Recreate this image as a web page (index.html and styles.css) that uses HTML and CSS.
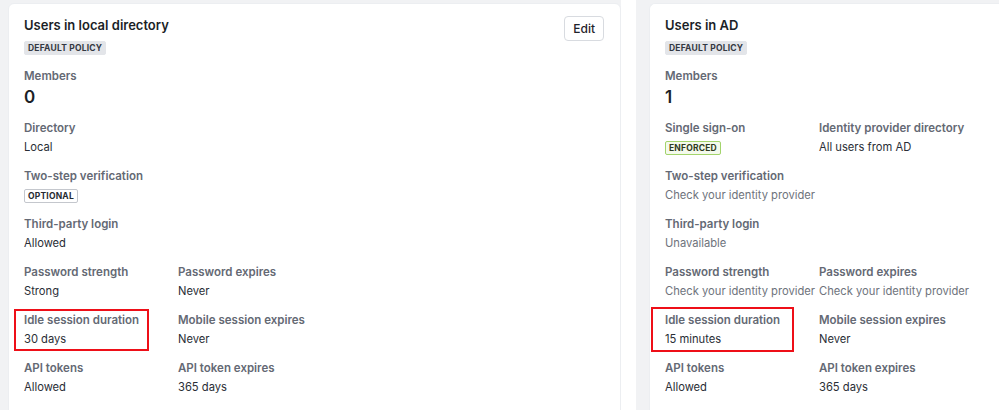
FILE: index.html
```html
<!DOCTYPE html>
<html lang="en">
<head>
<meta charset="utf-8">
<title>Policies</title>
<link rel="stylesheet" href="styles.css">
</head>
<body>
<div class="page">
  <div class="col col-a">
    <section class="card">
      <header class="card-head">
        <div class="head-main">
          <h2 class="title">Users in local directory</h2>
          <span class="badge badge-default">DEFAULT POLICY</span>
        </div>
        <button class="btn">Edit</button>
      </header>
      <div class="fields">
        <div class="field full">
          <div class="label">Members</div>
          <div class="count">0</div>
        </div>
        <div class="field full">
          <div class="label">Directory</div>
          <div class="value">Local</div>
        </div>
        <div class="field full">
          <div class="label">Two-step verification</div>
          <div class="value"><span class="badge badge-outline">OPTIONAL</span></div>
        </div>
        <div class="field full">
          <div class="label">Third-party login</div>
          <div class="value">Allowed</div>
        </div>
        <div class="field">
          <div class="label">Password strength</div>
          <div class="value">Strong</div>
        </div>
        <div class="field">
          <div class="label">Password expires</div>
          <div class="value">Never</div>
        </div>
        <div class="field mark mark-a">
          <div class="label">Idle session duration</div>
          <div class="value">30 days</div>
        </div>
        <div class="field">
          <div class="label">Mobile session expires</div>
          <div class="value">Never</div>
        </div>
        <div class="field">
          <div class="label">API tokens</div>
          <div class="value">Allowed</div>
        </div>
        <div class="field">
          <div class="label">API token expires</div>
          <div class="value">365 days</div>
        </div>
      </div>
    </section>
  </div>
  <div class="col col-b">
    <section class="card">
      <header class="card-head">
        <div class="head-main">
          <h2 class="title">Users in AD</h2>
          <span class="badge badge-default">DEFAULT POLICY</span>
        </div>
      </header>
      <div class="fields">
        <div class="field full">
          <div class="label">Members</div>
          <div class="count">1</div>
        </div>
        <div class="field">
          <div class="label">Single sign-on</div>
          <div class="value"><span class="badge badge-green">ENFORCED</span></div>
        </div>
        <div class="field">
          <div class="label">Identity provider directory</div>
          <div class="value">All users from AD</div>
        </div>
        <div class="field full">
          <div class="label">Two-step verification</div>
          <div class="value muted">Check your identity provider</div>
        </div>
        <div class="field full">
          <div class="label">Third-party login</div>
          <div class="value muted">Unavailable</div>
        </div>
        <div class="field">
          <div class="label">Password strength</div>
          <div class="value muted">Check your identity provider</div>
        </div>
        <div class="field">
          <div class="label">Password expires</div>
          <div class="value muted">Check your identity provider</div>
        </div>
        <div class="field mark mark-b">
          <div class="label">Idle session duration</div>
          <div class="value">15 minutes</div>
        </div>
        <div class="field">
          <div class="label">Mobile session expires</div>
          <div class="value">Never</div>
        </div>
        <div class="field">
          <div class="label">API tokens</div>
          <div class="value">Allowed</div>
        </div>
        <div class="field">
          <div class="label">API token expires</div>
          <div class="value">365 days</div>
        </div>
      </div>
    </section>
  </div>
</div>
</body>
</html>
```

FILE: styles.css
```css
*, *::before, *::after { box-sizing: border-box; }
html, body {
  margin: 0;
  padding: 0;
  background: #ffffff;
  font-family: Inter, "Noto Sans", "Liberation Sans", sans-serif;
  color: #1f232b;
  overflow: hidden;
}
.page {
  display: flex;
  gap: 15px;
  height: 410px;
}
.col {
  background: #f1f2f4;
  padding-top: 3px;
}
.col-a {
  width: 621px;
  padding-left: 8px;
  flex: none;
}
.col-b {
  flex: 1;
  padding-left: 13px;
}
.card {
  background: #ffffff;
  border: 1px solid #eceef1;
  border-radius: 6px;
  height: 420px;
  padding: 12px 16px 16px 15px;
}
.col-b .card {
  border-right: none;
  border-top-right-radius: 0;
}
.card-head {
  display: flex;
  justify-content: space-between;
  align-items: flex-start;
}
.head-main {
  line-height: 14px;
}
.title {
  margin: 0 0 7px;
  font-size: 13px;
  line-height: 18px;
  font-weight: 600;
  color: #1b1f27;
}
.badge {
  display: inline-block;
  font-size: 8.5px;
  line-height: 10px;
  font-weight: 700;
  letter-spacing: 0.2px;
  padding: 1px 3px;
  border-radius: 2px;
  vertical-align: middle;
}
.head-main .badge { vertical-align: top; }
.badge-default {
  background: #e3e5e9;
  color: #333842;
  border: 1px solid #e3e5e9;
}
.badge-outline {
  background: #ffffff;
  color: #262a31;
  border: 1px solid #c4c7cd;
}
.badge-green {
  background: #f4faec;
  color: #2f3a22;
  border: 1px solid #a3d46c;
}
.btn {
  margin-top: 0;
  height: 25px;
  padding: 0 8px;
  background: #ffffff;
  border: 1px solid #d8dbe0;
  border-radius: 4px;
  font-family: inherit;
  font-size: 12px;
  font-weight: 500;
  color: #1f232b;
}
.fields {
  margin-top: 12px;
  display: grid;
  grid-template-columns: 154px 1fr;
  row-gap: 10px;
}
.field.full { grid-column: 1 / -1; }
.label {
  font-size: 11.5px;
  line-height: 19px;
  font-weight: 600;
  color: #646974;
  white-space: nowrap;
}
.value {
  font-size: 11.2px;
  line-height: 19px;
  color: #2a2e36;
  white-space: nowrap;
}
.value.muted { color: #6e737c; }
.count {
  font-size: 17px;
  line-height: 23px;
  font-weight: 600;
  color: #1b1f27;
}
.mark { position: relative; }
.mark::after {
  content: "";
  position: absolute;
  border: 2px solid #ee0f18;
  pointer-events: none;
}
.mark-a::after { left: -10px; top: -2px; width: 135px; height: 42px; }
.mark-b::after { left: -14px; top: -4px; width: 143px; height: 45px; }
```
